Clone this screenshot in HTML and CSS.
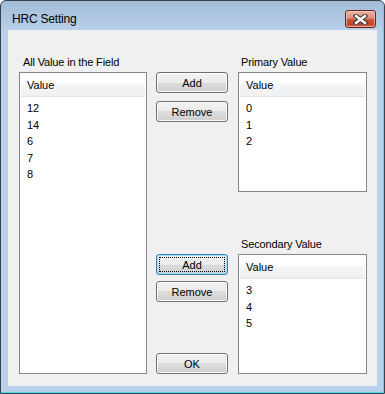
FILE: index.html
```html
<!DOCTYPE html>
<html lang="en">
<head>
    <meta charset="UTF-8">
    <meta name="viewport" content="width=device-width, initial-scale=1.0">
    <title>HRC Setting</title>
    <link rel="stylesheet" href="styles.css">
</head>
<body>

<div class="window">
    <div class="titlebar">
        <span class="title">HRC Setting</span>
        <button class="close" title="Close">
            <svg width="15" height="11" viewBox="0 0 15 11">
                <path d="M3 2 L12 9 M12 2 L3 9" stroke="#3b3b3b" stroke-width="4.6" stroke-linecap="square" fill="none"/>
                <path d="M3 2 L12 9 M12 2 L3 9" stroke="#ffffff" stroke-width="2.4" stroke-linecap="square" fill="none"/>
            </svg>
        </button>
    </div>

    <div class="client">
        <div class="col col-left">
            <div class="label label-left">All Value in the Field</div>
            <div class="listview lv-tall">
                <div class="lv-header">Value</div>
                <ul class="lv-items">
                    <li>12</li>
                    <li>14</li>
                    <li>6</li>
                    <li>7</li>
                    <li>8</li>
                </ul>
            </div>
        </div>

        <div class="col col-mid">
            <button class="btn btn-add1">Add</button>
            <button class="btn btn-remove1">Remove</button>
            <button class="btn btn-add2 focused">Add</button>
            <button class="btn btn-remove2">Remove</button>
            <button class="btn btn-ok">OK</button>
        </div>

        <div class="col col-right">
            <div class="label">Primary Value</div>
            <div class="listview lv-short">
                <div class="lv-header">Value</div>
                <ul class="lv-items">
                    <li>0</li>
                    <li>1</li>
                    <li>2</li>
                </ul>
            </div>

            <div class="label label-secondary">Secondary Value</div>
            <div class="listview lv-short">
                <div class="lv-header">Value</div>
                <ul class="lv-items">
                    <li>3</li>
                    <li>4</li>
                    <li>5</li>
                </ul>
            </div>
        </div>
    </div>
</div>

</body>
</html>
```

FILE: styles.css
```css
body { margin: 0; background: #ffffff; font-family: "Liberation Sans", Arial, sans-serif; }

/* window frame */
.window { width: 385px; height: 394px; box-sizing: border-box; border: 1px solid #38424e; border-radius: 6px 6px 0 0;
    background: linear-gradient(#a2bbd7 0px, #b9d1ea 30px, #b9d1ea 100%); box-shadow: inset -1px -1px 0 #5cd4e8;
    display: flex; flex-direction: column; }
.titlebar { height: 29px; box-sizing: border-box; padding: 9px 8px 0 11px; display: flex; align-items: flex-start; justify-content: space-between; }
.title { font-size: 12px; line-height: 18px; letter-spacing: -0.2px; color: #000; }
.close { width: 31px; height: 18px; padding: 0; border: 1px solid #6e2216; border-radius: 3px; display: flex; align-items: center; justify-content: center;
    background: linear-gradient(#eab2a5 0%, #dc8d7c 45%, #c7503a 55%, #c4452f 85%, #d86a4f 100%); box-shadow: inset 0 0 0 1px rgba(255,220,210,0.55); }

.client { height: 356px; margin: 0 7px; background: #f0f0f0; box-sizing: border-box; padding: 26px 0 0 11px; display: flex; align-items: flex-start; }
.col { display: flex; flex-direction: column; }
.col-left { width: 128px; }
.col-mid { width: 72px; margin-left: 9px; padding-top: 16px; }
.col-right { width: 129px; margin-left: 10px; }

.label { font-size: 11px; line-height: 13px; letter-spacing: -0.15px; color: #000; margin-bottom: 3px; padding-left: 3px; }
.label-left { padding-left: 4px; }
.label-secondary { margin-top: 46px; }

/* list views */
.listview { border: 1px solid #828790; background: #ffffff; box-sizing: border-box; }
.lv-tall { height: 302px; }
.lv-short { height: 120px; }
.lv-header { height: 24px; box-sizing: border-box; margin: 0 1px 0 1px; padding: 1px 0 0 6px; line-height: 22px; font-size: 11px;
    background: linear-gradient(#ffffff 0%, #ffffff 40%, #f3f4f6 55%, #eef0f2 100%); border-bottom: 1px solid #e3e5e8; }
.lv-items { list-style: none; margin: 0; padding: 3px 0 0 7px; font-size: 11px; line-height: 16.5px; }

/* push buttons */
.btn { width: 72px; height: 21px; padding: 0; font-family: "Liberation Sans", Arial, sans-serif; font-size: 11px; color: #000;
    border: 1px solid #707070; border-radius: 3px; position: relative;
    background: linear-gradient(#f2f2f2 0%, #ebebeb 50%, #dddddd 50%, #cfcfcf 100%); box-shadow: inset 0 0 0 1px #fbfbfb; }
.btn-remove1 { margin-top: 8px; }
.btn-add2 { margin-top: 132px; }
.btn-remove2 { margin-top: 6px; }
.btn-ok { margin-top: 51px; }
.focused { border-color: #3c7fb1; box-shadow: inset 0 0 0 1px #9fdcf7; }
.focused::after { content: ""; position: absolute; left: 2px; top: 2px; right: 2px; bottom: 2px; border: 1px dotted #000; }
```
